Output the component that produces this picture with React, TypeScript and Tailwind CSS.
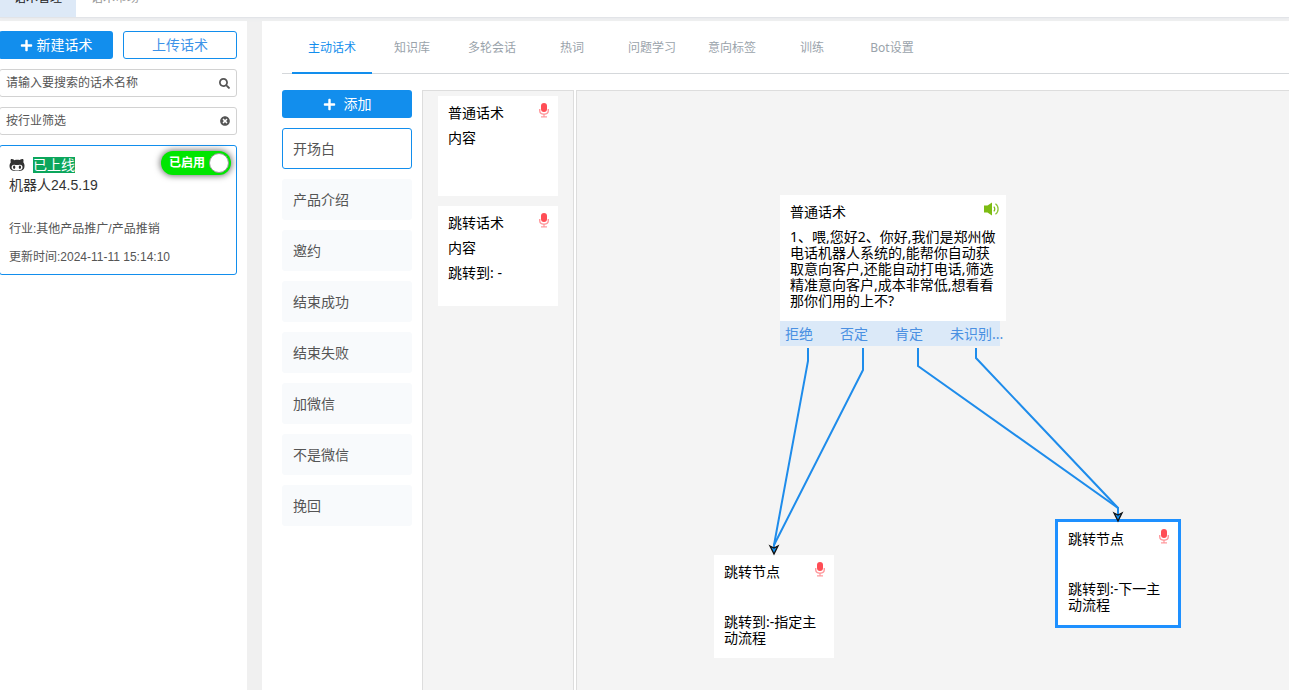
import { useState } from "react";
import type { ReactNode } from "react";
import { FaGithubAlt, FaPlus, FaSearch, FaTimesCircle } from "react-icons/fa";

type Point = { x: number; y: number };

const tabs = [
  "主动话术",
  "知识库",
  "多轮会话",
  "热词",
  "问题学习",
  "意向标签",
  "训练",
  "Bot设置",
];

const flows = [
  "开场白",
  "产品介绍",
  "邀约",
  "结束成功",
  "结束失败",
  "加微信",
  "不是微信",
  "挽回",
];

const ports = ["拒绝", "否定", "肯定", "未识别..."];

// canvas coordinates, origin at the top left of the canvas
const edges: Point[][] = [
  [{ x: 231, y: 257 }, { x: 231, y: 270 }, { x: 197, y: 454 }, { x: 197, y: 460 }],
  [{ x: 286, y: 257 }, { x: 286, y: 279 }, { x: 197, y: 454 }, { x: 197, y: 460 }],
  [{ x: 341, y: 257 }, { x: 341, y: 275 }, { x: 541, y: 417 }, { x: 541, y: 426 }],
  [{ x: 399, y: 257 }, { x: 399, y: 267 }, { x: 541, y: 417 }, { x: 541, y: 426 }],
];

const arrows: Point[] = [
  { x: 197, y: 463 },
  { x: 541, y: 430 },
];

function MicIcon() {
  return (
    <svg width="10" height="15" viewBox="0 0 10 15" fill="none" aria-hidden="true">
      <path
        d="M0.7 6v1.5C0.7 10 2.6 11.2 5 11.2S9.3 10 9.3 7.5V6"
        stroke="#ff9a9e"
        strokeWidth="1.4"
      />
      <path d="M5 11v3M2 13.9h6" stroke="#ff9a9e" strokeWidth="1.2" />
      <rect x="2" y="0" width="6" height="9" rx="3" fill="#ff4d55" />
    </svg>
  );
}

function SpeakerIcon() {
  return (
    <svg width="16" height="14" viewBox="0 0 16 14" fill="none" aria-hidden="true">
      <path d="M0 3.5h3.5L8 0.4v13.2L3.5 10.5H0z" fill="#7dbc13" />
      <path d="M9.8 4.6c1.3 1.3 1.3 3.5 0 4.8" stroke="#7dbc13" strokeWidth="1.3" />
      <path d="M11.4 1.8c3.6 2.4 3.6 8 0 10.4" stroke="#8fc638" strokeWidth="1.3" />
    </svg>
  );
}

function NodeBox({
  title,
  icon,
  className = "",
  children,
}: {
  title: string;
  icon?: ReactNode;
  className?: string;
  children?: ReactNode;
}) {
  return (
    <div className={`relative bg-white px-[10px] pt-1 text-sm leading-[25px] text-black ${className}`}>
      <h3>{title}</h3>
      {icon ?? (
        <span className="absolute top-[7px] right-[9px]">
          <MicIcon />
        </span>
      )}
      {children}
    </div>
  );
}

function Lines({ lines }: { lines: string[] }) {
  return (
    <p className="pt-[5px] pb-3 leading-4 whitespace-pre-line">
      {lines.join("\n")}
    </p>
  );
}

function Sidebar() {
  const [enabled, setEnabled] = useState(true);

  return (
    <aside className="flex w-[247px] shrink-0 flex-col gap-[10px] bg-white pt-[10px] pr-[10px]">
      <div className="-ml-px grid grid-cols-2 gap-[10px] text-sm">
        <button className="flex h-7 items-center justify-center gap-1 rounded-[3px] bg-[#128eed] text-white">
          <FaPlus size={13} />
          新建话术
        </button>
        <button className="h-7 rounded-[3px] border border-[#128eed] text-[#3d93e8]">
          上传话术
        </button>
      </div>

      <div className="relative -ml-px text-xs text-[#555]">
        <input
          type="text"
          aria-label="请输入要搜索的话术名称"
          placeholder="请输入要搜索的话术名称"
          className="block h-7 w-full rounded-[3px] border border-[#d2d2d2] px-[6px] outline-none placeholder:text-[#555]"
        />
        <FaSearch size={11} className="absolute top-[9px] right-[7px]" />
      </div>

      <div className="relative -ml-px text-xs text-[#555]">
        <select
          aria-label="按行业筛选"
          className="block h-7 w-full appearance-none rounded-[3px] border border-[#d2d2d2] px-[6px] outline-none"
        >
          <option>按行业筛选</option>
        </select>
        <FaTimesCircle size={10} className="absolute top-[9px] right-[7px]" />
      </div>

      <section className="relative -ml-px h-[130px] rounded-[3px] border border-[#128eed] px-[9px] pt-[9px] text-xs text-[#555]">
        <div className="flex h-5 items-center gap-2 text-sm leading-4">
          <FaGithubAlt size={16} className="text-[#333]" />
          <span className="bg-[#0ca65c] text-white">已上线</span>
        </div>
        <h2 className="text-sm leading-5 text-[#333]">机器人24.5.19</h2>
        <p className="mt-5 leading-7">行业:其他产品推广/产品推销</p>
        <p className="leading-7">更新时间:2024-11-11 15:14:10</p>
        <label className="absolute top-[5px] right-[5px] flex h-6 w-[70px] items-center justify-between rounded-full bg-[#00e600] pr-[2px] pl-2 font-bold text-white shadow-[0_0_6px_1px_#777]">
          <input
            type="checkbox"
            role="switch"
            className="sr-only"
            checked={enabled}
            onChange={(e) => setEnabled(e.target.checked)}
          />
          已启用
          <span className="size-5 rounded-full border border-[#999] bg-white" />
        </label>
      </section>
    </aside>
  );
}

function Canvas() {
  return (
    <div className="relative flex-1 overflow-hidden border-t border-l border-[#ddd] bg-[#f4f4f4]">
      <div className="absolute top-[104px] left-[203px]">
        <NodeBox
          title="普通话术"
          className="w-[226px]"
          icon={
            <span className="absolute top-[7px] right-[6px]">
              <SpeakerIcon />
            </span>
          }
        >
          <Lines
            lines={[
              "1、喂,您好2、你好,我们是郑州做",
              "电话机器人系统的,能帮你自动获",
              "取意向客户,还能自动打电话,筛选",
              "精准意向客户,成本非常低,想看看",
              "那你们用的上不?",
            ]}
          />
        </NodeBox>
        <ul className="grid w-[220px] grid-cols-4 bg-[#dbe9f8] text-sm leading-[25px] text-[#4a90e2]">
          {ports.map((port) => (
            <li key={port} className="pl-[5px] whitespace-nowrap">
              {port}
            </li>
          ))}
        </ul>
      </div>

      <div className="absolute top-[464px] left-[137px]">
        <NodeBox title="跳转节点" className="w-[120px]">
          <div className="h-[25px]" />
          <Lines lines={["跳转到:-指定主", "动流程"]} />
        </NodeBox>
      </div>

      <div className="absolute top-[431px] left-[481px]">
        <NodeBox title="跳转节点" className="w-[120px] outline-3 outline-[#1e90ff]">
          <div className="h-[25px]" />
          <Lines lines={["跳转到:-下一主", "动流程"]} />
        </NodeBox>
      </div>

      <svg className="pointer-events-none absolute inset-0 size-full" fill="none" aria-hidden="true">
        {edges.map((edge, i) => (
          <polyline
            key={i}
            points={edge.map((p) => `${p.x},${p.y}`).join(" ")}
            stroke="#1e8ceb"
            strokeWidth="2"
          />
        ))}
        {arrows.map((p) => (
          <path
            key={p.x}
            d={`M${p.x - 4} ${p.y - 8}L${p.x} ${p.y - 6}L${p.x + 4} ${p.y - 8}L${p.x} ${p.y}Z`}
            fill="#128eed"
            stroke="#111"
            strokeWidth="1.3"
          />
        ))}
      </svg>
    </div>
  );
}

export default function App() {
  const [tab, setTab] = useState("主动话术");
  const [flow, setFlow] = useState("开场白");

  return (
    <div className="flex h-screen flex-col overflow-hidden bg-[#f0f0f0] font-['Liberation_Sans','Noto_Sans_CJK_SC',sans-serif]">
      <header className="relative z-10 flex h-[18px] shrink-0 items-end border-b border-[#e2e4e8] bg-white text-xs shadow-[0_1px_3px_#e8eaee]">
        <nav className="flex h-[38px] leading-[38px]">
          <a href="#manage" className="w-[76px] bg-[#dde9f7] text-center text-[#222]">
            话术管理
          </a>
          <a href="#market" className="w-[78px] text-center text-[#999]">
            话术市场
          </a>
        </nav>
      </header>

      <div className="mt-[3px] flex min-h-0 flex-1 gap-[15px]">
        <Sidebar />

        <main className="flex min-w-0 flex-1 flex-col bg-white pl-5 font-['Noto_Sans','Noto_Sans_CJK_SC',sans-serif]">
          <nav className="flex h-[53px] shrink-0 border-b border-[#d5d8db] pl-[10px] text-xs">
            {tabs.map((name) => (
              <button
                key={name}
                onClick={() => setTab(name)}
                className={`-mb-px w-20 border-b-2 pt-[2px] ${
                  name === tab
                    ? "border-[#128eed] text-[#128eed]"
                    : "border-transparent text-[#9aa3ab]"
                }`}
              >
                {name}
              </button>
            ))}
          </nav>

          <div className="flex min-h-0 flex-1 pt-4">
            <div className="mr-[10px] flex w-[130px] shrink-0 flex-col gap-[10px] text-sm">
              <button className="flex h-7 items-center justify-center gap-2 rounded-[3px] bg-[#128eed] text-white">
                <FaPlus size={13} />
                添加
              </button>
              {flows.map((name) => (
                <button
                  key={name}
                  onClick={() => setFlow(name)}
                  className={`h-[41px] rounded-[3px] border px-[10px] text-left text-[#555] ${
                    name === flow ? "border-[#128eed] bg-white" : "border-[#f8fafc] bg-[#f8fafc]"
                  }`}
                >
                  {name}
                </button>
              ))}
            </div>

            <div className="mr-[2px] flex w-[152px] shrink-0 flex-col gap-[10px] border-x border-t border-[#ddd] bg-[#f4f4f4] pt-[5px] pl-[15px]">
              <NodeBox title="普通话术" className="h-[100px] w-[120px]">
                <p>内容</p>
              </NodeBox>
              <NodeBox title="跳转话术" className="h-[100px] w-[120px]">
                <p>内容</p>
                <p>跳转到: -</p>
              </NodeBox>
            </div>

            <Canvas />
          </div>
        </main>
      </div>
    </div>
  );
}
